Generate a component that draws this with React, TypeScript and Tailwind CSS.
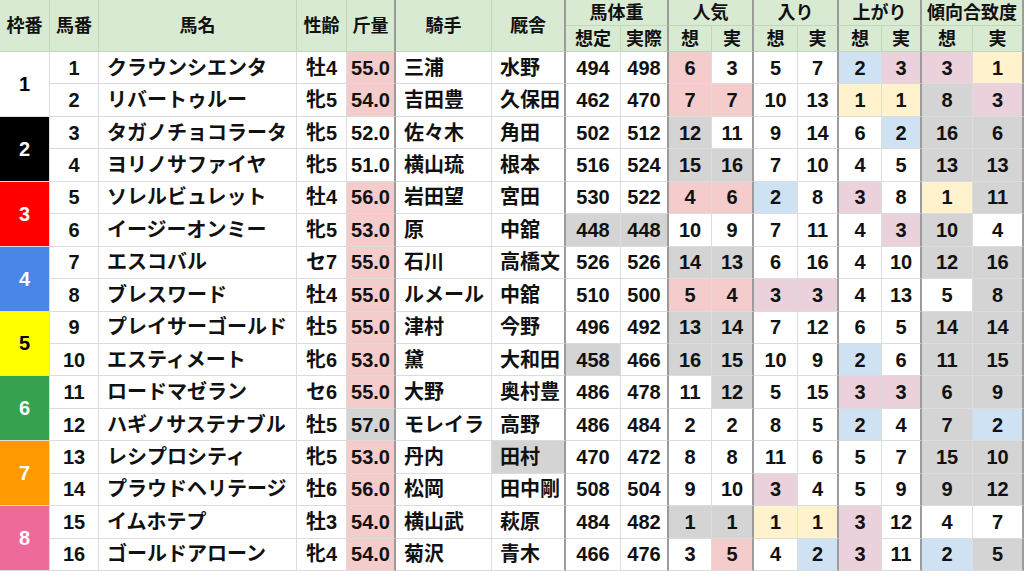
import React from "react";

const COLORS: Record<string, string> = {
  P: "bg-[#f4cccc]",
  G: "bg-[#d4d4d4]",
  B: "bg-[#cfe2f3]",
  M: "bg-[#ead1dc]",
  Y: "bg-[#fff2cc]",
};

const THICK = new Set([4, 6, 8, 10, 12, 14, 16]);
const LEFT = new Set([2, 5, 6]);

const FRAMES = [
  "bg-white text-black",
  "bg-black text-white",
  "bg-[#ff0000] text-white",
  "bg-[#4a86e8] text-white",
  "bg-[#ffff00] text-black",
  "bg-[#36a24e] text-white",
  "bg-[#ff9900] text-white",
  "bg-[#ee6a9a] text-white",
];

const ROWS: string[][] = [
  ["1", "クラウンシエンタ", "牡4", "55.0|P", "三浦", "水野", "494", "498", "6|P", "3", "5", "7", "2|B", "3|M", "3|M", "1|Y"],
  ["2", "リバートゥルー", "牝5", "54.0|P", "吉田豊", "久保田", "462", "470", "7|P", "7|P", "10", "13", "1|Y", "1|Y", "8|G", "3|M"],
  ["3", "タガノチョコラータ", "牝5", "52.0", "佐々木", "角田", "502", "512", "12|G", "11", "9", "14", "6", "2|B", "16|G", "6|G"],
  ["4", "ヨリノサファイヤ", "牝5", "51.0", "横山琉", "根本", "516", "524", "15|G", "16|G", "7", "10", "4", "5", "13|G", "13|G"],
  ["5", "ソレルビュレット", "牡4", "56.0|P", "岩田望", "宮田", "530", "522", "4|P", "6|P", "2|B", "8", "3|M", "8", "1|Y", "11|G"],
  ["6", "イージーオンミー", "牝5", "53.0|P", "原", "中舘", "448|G", "448|G", "10", "9", "7", "11", "4", "3|M", "10|G", "4"],
  ["7", "エスコバル", "セ7", "55.0|P", "石川", "高橋文", "526", "526", "14|G", "13|G", "6", "16", "4", "10", "12|G", "16|G"],
  ["8", "ブレスワード", "牡4", "55.0|P", "ルメール", "中舘", "510", "500", "5|P", "4|P", "3|M", "3|M", "4", "13", "5", "8|G"],
  ["9", "プレイサーゴールド", "牡5", "55.0|P", "津村", "今野", "496", "492", "13|G", "14|G", "7", "12", "6", "5", "14|G", "14|G"],
  ["10", "エスティメート", "牝6", "53.0|P", "黛", "大和田", "458|G", "466", "16|G", "15|G", "10", "9", "2|B", "6", "11|G", "15|G"],
  ["11", "ロードマゼラン", "セ6", "55.0|P", "大野", "奥村豊", "486", "478", "11", "12|G", "5", "15", "3|M", "3|M", "6|G", "9|G"],
  ["12", "ハギノサステナブル", "牡5", "57.0|G", "モレイラ", "高野", "486", "484", "2", "2", "8", "5", "2|B", "4", "7|G", "2|B"],
  ["13", "レシプロシティ", "牝5", "53.0|P", "丹内", "田村|G", "470", "472", "8", "8", "11", "6", "5", "7", "15|G", "10|G"],
  ["14", "プラウドヘリテージ", "牡6", "56.0|P", "松岡", "田中剛", "508", "504", "9", "10", "3|M", "4", "5", "9", "9|G", "12|G"],
  ["15", "イムホテプ", "牡3", "54.0|P", "横山武", "萩原", "484", "482", "1|G", "1|G", "1|Y", "1|Y", "3|M", "12", "4", "7"],
  ["16", "ゴールドアローン", "牝4", "54.0|P", "菊沢", "青木", "466", "476", "3", "5|P", "4", "2|B", "3|M", "11", "2|B", "5|G"],
];

function bodyCell(raw: string, col: number, key: string) {
  const [val, c] = raw.split("|");
  const bg = c ? COLORS[c] : "bg-white";
  const right = THICK.has(col)
    ? "border-r-2 border-r-[#9b9b9b]"
    : "border-r border-r-[#dcdcdc]";
  const align = LEFT.has(col) ? "justify-start pl-2" : "justify-center";
  return (
    <div
      key={key}
      className={`flex items-center ${align} ${bg} ${right} border-b border-b-[#dcdcdc] whitespace-nowrap overflow-hidden`}
    >
      {val}
    </div>
  );
}

function headCell(text: string, col: number, span: string, key: string) {
  const right = THICK.has(col)
    ? "border-r-2 border-r-[#9b9b9b]"
    : "border-r border-r-[#c2d6ba]";
  return (
    <div
      key={key}
      className={`flex items-center justify-center bg-[#d9ead3] ${right} border-b border-b-[#c2d6ba] ${span} text-[18px] whitespace-nowrap overflow-hidden`}
    >
      {text}
    </div>
  );
}

export default function App() {
  const cells: React.ReactNode[] = [];
  const tops = ["枠番", "馬番", "馬名", "性齢", "斤量", "騎手", "厩舎"];
  tops.forEach((t, i) => cells.push(headCell(t, i, "row-span-2", `h${i}`)));
  const groups = ["馬体重", "人気", "入り", "上がり", "傾向合致度"];
  groups.forEach((g, i) => cells.push(headCell(g, 8 + i * 2, "col-span-2", `g${i}`)));
  const subs = ["想定", "実際", "想", "実", "想", "実", "想", "実", "想", "実"];
  subs.forEach((s, i) => cells.push(headCell(s, 7 + i, "", `s${i}`)));

  ROWS.forEach((row, r) => {
    if (r % 2 === 0) {
      const f = r / 2;
      cells.push(
        <div
          key={`f${r}`}
          className={`row-span-2 flex items-center justify-center border-r border-r-[#dcdcdc] border-b border-b-[#dcdcdc] ${FRAMES[f]}`}
        >
          {f + 1}
        </div>
      );
    }
    row.forEach((v, i) => cells.push(bodyCell(v, i + 1, `c${r}-${i}`)));
  });

  return (
    <div className="w-[1024px] h-[571px] overflow-hidden bg-white font-['Liberation_Sans','Noto_Sans_CJK_JP',sans-serif] font-bold text-[20px] leading-none text-[#111]">
      <div className="grid grid-cols-[50px_49px_198px_50px_49px_96px_74px_55px_48px_43px_42px_44px_41px_43px_40px_51px_51px] grid-rows-[26px_26px_repeat(16,32.44px)]">
        {cells}
      </div>
    </div>
  );
}
